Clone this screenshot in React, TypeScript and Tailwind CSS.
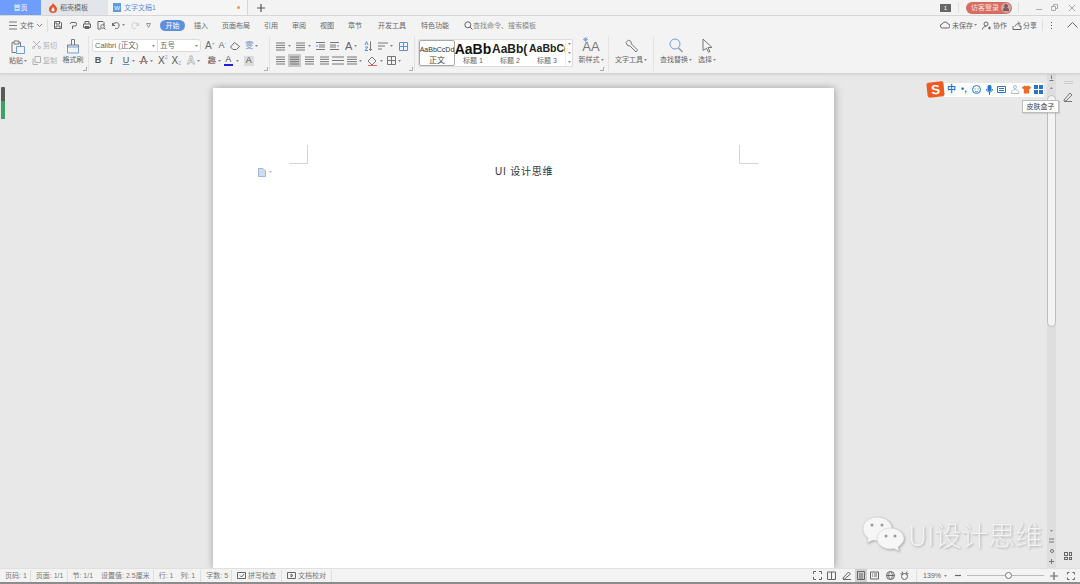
import React from "react";

const S = ({ w = 10, h = 10, c = "", children }: { w?: number; h?: number; c?: string; children?: React.ReactNode }) => (
  <svg width={w} height={h} viewBox={`0 0 ${w} ${h}`} fill="none" stroke="currentColor" strokeWidth={1} className={`shrink-0 block ${c}`}>
    {children}
  </svg>
);
const Car = ({ c = "" }: { c?: string }) => (
  <svg width={3} height={2} viewBox="0 0 3 2" className={`shrink-0 block ${c}`}><path d="M0 0h3L1.5 2z" fill="#8a8a8a" /></svg>
);
const Sep = ({ c = "" }: { c?: string }) => <div className={`w-px bg-[#dedede] shrink-0 ${c}`} />;
const Corner = ({ c = "" }: { c?: string }) => (
  <svg width={4} height={4} viewBox="0 0 4 4" className={`shrink-0 block text-[#999] ${c}`} fill="none" stroke="currentColor" strokeWidth={0.8}><path d="M0 3.5h3.5V0" /></svg>
);
const Lines = ({ w = 9, n = 4, c = "" }: { w?: number; n?: number; c?: string }) => (
  <S w={w} h={9} c={c}>
    {Array.from({ length: n }).map((_, i) => (
      <path key={i} d={`M0 ${1 + (i * 7) / (n - 1)}h${w}`} stroke="#777" />
    ))}
  </S>
);

const menu: [string, string][] = [
  ["插入", "ml-[9px]"],
  ["页面布局", "ml-[14px]"],
  ["引用", "ml-[14px]"],
  ["审阅", "ml-[14px]"],
  ["视图", "ml-[14px]"],
  ["章节", "ml-[14px]"],
  ["开发工具", "ml-[16px]"],
  ["特色功能", "ml-[15px]"],
];

export default function App() {
  return (
    <div className="w-[1080px] h-[584px] flex flex-col overflow-hidden relative bg-[#e8e8e8] text-[#666] text-[7px] leading-none font-['Liberation_Sans','Noto_Sans_CJK_SC',sans-serif]">
      {/* tab bar */}
      <div className="h-[16px] shrink-0 flex bg-[#f3f3f3] border-b border-[#d6d6d6]">
        <div className="w-[41px] bg-[#6f9dfb] text-white flex items-center justify-center">首页</div>
        <div className="w-[67px] bg-[#e2e5ea] flex items-center pl-[8px] gap-[3px]">
          <svg width={8} height={10} viewBox="0 0 8 10" className="block"><path d="M4 0c1 2 4 3 4 6a4 4 0 0 1-8 0c0-3 3-3 4-6z" fill="#e4572e" /><path d="M4 4c.5 1 1.5 1.5 1.5 3a1.5 1.5 0 0 1-3 0C2.500 6 3.500 5 4 4z" fill="#fff" /></svg>
          <span>稻壳模板</span>
        </div>
        <div className="w-[140px] flex items-center pl-[5px] border-r border-[#d6d6d6] bg-[#f5f5f5]">
          <div className="w-[8px] h-[9px] bg-[#5a9ae6] text-white text-[6px] flex items-center justify-center">W</div>
          <span className="ml-[3px] text-[#5f8fe0]">文字文稿1</span>
          <div className="ml-auto mr-[7px] w-[3px] h-[3px] rounded-full bg-[#ee9a4d]" />
        </div>
        <S w={8} h={8} c="ml-[9px] self-center text-[#555]"><path d="M4 0v8M0 4h8" strokeWidth={1.2} /></S>
        <div className="ml-auto flex items-center">
          <div className="w-[11px] h-[8px] bg-[#666] text-white text-[6px] flex items-center justify-center">1</div>
          <Sep c="h-[11px] ml-[7px]" />
          <div className="ml-[7px] w-[46px] h-[12px] rounded-full bg-[#d96b60] text-[#f8e2df] flex items-center pl-[5px]">
            <span>访客登录</span>
            <div className="ml-auto mr-[1px] w-[10px] h-[10px] rounded-full bg-[#c9aaa6] flex items-center justify-center">
              <S w={6} h={7} c="text-[#7d5a57]"><circle cx={3} cy={2} r={1.500} fill="currentColor" /><path d="M0 7c0-2 1-3 3-3s3 1 3 3z" fill="currentColor" /></S>
            </div>
          </div>
          <Sep c="h-[11px] ml-[6px]" />
          <S w={6} h={6} c="ml-[17px] text-[#aaa]"><path d="M0 4.500h6" /></S>
          <S w={7} h={7} c="ml-[9px] text-[#aaa]"><path d="M.5 2.500h4v4h-4zM2.500 2.500V.5h4v4h-2" /></S>
          <S w={6} h={6} c="ml-[11px] mr-[5px] text-[#aaa]"><path d="M0 0l6 6M6 0L0 6" /></S>
        </div>
      </div>

      {/* menu row */}
      <div className="h-[18px] shrink-0 flex items-center bg-[#f3f3f3] pl-[9px]">
        <Lines w={8} n={3} />
        <span className="ml-[3px]">文件</span>
        <S w={5} h={3} c="ml-[3px] text-[#888]"><path d="M0 0l2.500 2.500L5 0" /></S>
        <Sep c="h-[13px] ml-[5px]" />
        <S w={8} h={8} c="ml-[6px]"><path d="M.5.500h5.500l1.500 1.500v5.500h-7zM2 .5v2.500h3.500V.5M2 7.500V5h4v2.500" /></S>
        <S w={8} h={9} c="ml-[7px]"><path d="M2 1.500h4a1.500 1.500 0 0 1 0 3.500H3.500M1 3l1-1.500M3.500 5v3" /></S>
        <S w={8} h={8} c="ml-[6px]"><path d="M2 3V.5h4V3M.5 3h7v3.500h-7zM2 5.500h4v2H2z" /></S>
        <S w={9} h={9} c="ml-[6px]"><path d="M1 .5h5l1 1v3M1 .5v7.500h3" /><circle cx={5.500} cy={5.500} r={1.800} /><path d="M7 7l1.500 1.500" /></S>
        <S w={8} h={7} c="ml-[6px]"><path d="M1 3.500a3 3 0 1 1 2 3M.5 1v2.500H3" /></S>
        <Car c="ml-[2px]" />
        <S w={8} h={7} c="ml-[6px] text-[#ccc]"><path d="M7 3.500a3 3 0 1 0-2 3M7.500 1v2.500H5" /></S>
        <S w={5} h={5} c="ml-[7px] text-[#999]"><path d="M.5.500h4L2.500 4.500z" /></S>
        <div className="ml-[9px] w-[25px] h-[11px] rounded-full bg-[#5d8fe0] text-white flex items-center justify-center">开始</div>
        {menu.map(([t, c]) => (
          <span key={t} className={c}>{t}</span>
        ))}
        <S w={9} h={9} c="ml-[15px]"><circle cx={3.800} cy={3.800} r={3} /><path d="M6 6l2.500 2.500" /></S>
        <span className="text-[#888]">查找命令、搜索模板</span>
        <div className="ml-auto flex items-center">
          <S w={10} h={8} c="text-[#666]"><path d="M2.500 7a2 2 0 0 1-.2-4A3 3 0 0 1 8 3a2 2 0 0 1 0 4z" /></S>
          <span className="ml-[2px]">未保存</span>
          <Car c="ml-[1px]" />
          <S w={9} h={9} c="ml-[5px] text-[#666]"><circle cx={4} cy={3} r={2} /><path d="M.5 8.500c0-2 1.500-3 3.500-3M6 7h3M7.500 5.500v3" /></S>
          <span className="ml-[2px]">协作</span>
          <S w={10} h={9} c="ml-[5px] text-[#666]"><path d="M1 5v3.500h8V5H7M3 5.500C3.500 3.500 5 2.500 7 2.500M6 .5l2 2-2 2" /></S>
          <span className="ml-[1px]">分享</span>
          <Sep c="h-[11px] ml-[5px]" />
          <div className="ml-[8px] flex flex-col gap-[2px]">
            <div className="w-[1px] h-[1px] bg-[#555]" />
            <div className="w-[1px] h-[1px] bg-[#555]" />
            <div className="w-[1px] h-[1px] bg-[#555]" />
          </div>
          <S w={11} h={6} c="ml-[15px] mr-[2px] text-[#666]"><path d="M.5 5.500L5.500.5l5 5" /></S>
        </div>
      </div>

      {/* ribbon */}
      <div className="h-[40px] shrink-0 flex bg-[#f3f3f3] border-b border-[#d3d3d3] shadow-[0_1px_2px_rgba(0,0,0,0.08)] relative">
        {/* clipboard */}
        <div className="w-[89px] shrink-0 flex border-r border-[#e3e3e3] my-[2px] relative">
          <div className="ml-[8px] w-[20px] flex flex-col items-center pt-[4px]">
            <S w={14} h={15}><path d="M2.500 2.500H1v10h4M3 1h5v3H3zM8 2.500h1.500V6" stroke="#777" /><path d="M5.500 6.500h8v7h-8z" stroke="#6f9fdc" /></S>
            <div className="mt-[2px] flex items-center">粘贴<Car c="ml-[1px]" /></div>
          </div>
          <div className="ml-[4px] w-[28px] flex flex-col pt-[5px] text-[#b0b0b0]">
            <div className="flex items-center gap-[2px]">
              <S w={9} h={8}><path d="M1 0l6 6M8 0L2 6" /><circle cx={1.500} cy={6.500} r={1} /><circle cx={7.500} cy={6.500} r={1} /></S>
              剪切
            </div>
            <div className="flex items-center gap-[2px] mt-[7px]">
              <S w={9} h={9}><path d="M3 .5h5.500v6H3zM1 2.500v6h5" /></S>
              复制
            </div>
          </div>
          <div className="ml-[1px] w-[24px] flex flex-col items-center pt-[2px]">
            <S w={14} h={16}><path d="M5.500 7V1.500h3V7M1.500 9V7h11v2" stroke="#777" /><path d="M1.500 9h11v6h-11z" stroke="#6f9fdc" /></S>
            <div className="mt-[2px] whitespace-nowrap">格式刷</div>
          </div>
          <Corner c="absolute right-[1px] bottom-0" />
        </div>

        {/* font */}
        <div className="w-[181px] shrink-0 flex flex-col border-r border-[#e3e3e3] my-[2px] pl-[3px] pt-[3px] relative">
          <div className="flex items-center h-[13px]">
            <div className="w-[109px] shrink-0 h-[13px] bg-white rounded-[3px] border border-[#dcdcdc] flex items-center text-[7.500px]">
              <div className="w-[64px] shrink-0 flex items-center">
                <span className="ml-[2px] whitespace-nowrap">Calibri (正文)</span>
                <Car c="ml-auto mr-[2px]" />
              </div>
              <Sep c="h-[11px]" />
              <div className="flex-1 flex items-center">
                <span className="ml-[2px] whitespace-nowrap">五号</span>
                <Car c="ml-auto mr-[2px]" />
              </div>
            </div>
            <span className="ml-[4px] text-[10px] text-[#666]">A</span>
            <span className="text-[5px] text-[#6f9fdc] self-start mt-[2px]">+</span>
            <span className="ml-[4px] text-[9px] text-[#666]">A</span>
            <span className="text-[5px] text-[#6f9fdc] self-start mt-[2px]">-</span>
            <S w={10} h={8} c="ml-[4px] text-[#666]"><path d="M.5 5L4.500.5l5 4-3 3H3z" /></S>
            <span className="ml-[5px] text-[8px] text-[#7a8fc8] whitespace-nowrap">雯</span>
            <Car c="ml-[2px]" />
          </div>
          <div className="flex items-center mt-[3px] h-[11px] text-[#555]">
            <span className="ml-[2px] w-[8px] text-center text-[9px] font-bold">B</span>
            <span className="ml-[6px] w-[7px] text-center text-[10px] italic font-['Liberation_Serif',serif]">I</span>
            <span className="ml-[7px] w-[8px] text-center text-[9px] underline decoration-[#5d8fe0]">U</span>
            <Car c="ml-[2px]" />
            <span className="ml-[4px] w-[9px] text-center text-[10px] relative">A<span className="absolute left-0 right-0 top-[5px] h-px bg-[#d96b60]" /></span>
            <Car c="ml-[2px]" />
            <span className="ml-[5px] text-[10px]">X</span>
            <span className="text-[5px] text-[#6f9fdc] self-start">2</span>
            <span className="ml-[4px] text-[10px]">X</span>
            <span className="text-[5px] text-[#6f9fdc] self-end">2</span>
            <span className="ml-[6px] text-[11px] font-bold [-webkit-text-stroke:0.3px_#666] text-transparent">A</span>
            <Car c="ml-[2px]" />
            <span className="ml-[8px] text-[8px] relative">趣<span className="absolute left-0 right-0 top-[4px] h-px bg-[#d96b60]" /></span>
            <Car c="ml-[2px]" />
            <span className="ml-[3px] w-[9px] text-center text-[9px] border-b-2 border-[#1d1dd8] h-[11px]">A</span>
            <Car c="ml-[3px]" />
            <span className="ml-[5px] w-[10px] h-[10px] bg-[#dcdcdc] flex items-center justify-center text-[9px]">A</span>
          </div>
          <Corner c="absolute right-[1px] bottom-0" />
        </div>

        {/* paragraph */}
        <div className="w-[145px] shrink-0 flex flex-col border-r border-[#e3e3e3] my-[2px] pl-[6px] pt-[4px] relative">
          <div className="flex items-center h-[12px]">
            <Lines w={9} />
            <Car c="ml-[3px]" />
            <Lines w={9} c="ml-[5px]" />
            <Car c="ml-[3px]" />
            <S w={9} h={8} c="ml-[5px] text-[#777]"><path d="M0 .5h9M3 3h6M3 5h6M0 7.500h9" /><path d="M0 4h2" stroke="#5d8fe0" /></S>
            <S w={9} h={8} c="ml-[5px] text-[#777]"><path d="M0 .5h9M0 3h6M0 5h6M0 7.500h9" /><path d="M7 4h2" stroke="#5d8fe0" /></S>
            <span className="ml-[6px] text-[11px] text-[#666]">A</span>
            <Car c="ml-[2px]" />
            <S w={8} h={10} c="ml-[7px] text-[#777]"><path d="M1 4l1.500-3.500L4 4M1 6h3L1 9.500h3" stroke="#5d8fe0" /><path d="M6.500 .5v9M5 8l1.500 1.500L8 8" /></S>
            <S w={10} h={8} c="ml-[6px] text-[#777]"><path d="M0 1h10M0 4h7M0 7h4" /></S>
            <Car c="ml-[2px]" />
            <S w={9} h={9} c="ml-[6px] text-[#5d8fe0]"><path d="M.5.500h8v8h-8zM4.500.5v8M.5 4.500h8" /></S>
          </div>
          <div className="flex items-center mt-[2px] h-[13px]">
            <Lines w={9} />
            <div className="ml-[3px] w-[13px] h-[13px] bg-[#c8c8c8] rounded-[1px] flex items-center justify-center"><Lines w={9} /></div>
            <Lines w={9} c="ml-[4px]" />
            <Lines w={9} c="ml-[6px]" />
            <Lines w={12} n={3} c="ml-[3px]" />
            <Lines w={10} c="ml-[3px]" />
            <Car c="ml-[2px]" />
            <S w={11} h={10} c="ml-[5px] text-[#777]"><path d="M1 5l4-4 4 4-4 4z" /><path d="M1 9.500h9" stroke="#d96b60" /></S>
            <Car c="ml-[2px]" />
            <S w={9} h={9} c="ml-[4px] text-[#777]"><path d="M.5.500h8v8h-8zM4.500.5v8M.5 4.500h8" /></S>
            <Car c="ml-[2px]" />
          </div>
          <Corner c="absolute right-[1px] bottom-0" />
        </div>

        {/* styles */}
        <div className="w-[194px] shrink-0 flex border-r border-[#e3e3e3] my-[2px] relative">
          <div className="ml-[3px] mt-[3px] w-[155px] h-[28px] bg-white border border-[#dcdcdc] rounded-[2px] flex overflow-hidden">
            <div className="w-[36px] shrink-0 border border-[#a8a8a8] rounded-[2px] flex flex-col items-center overflow-hidden">
              <div className="h-[17px] flex items-center text-[7px] text-[#333] whitespace-nowrap">AaBbCcDd</div>
              <div className="text-[#444] text-[8px]">正文</div>
            </div>
            <div className="w-[36px] shrink-0 flex flex-col items-center overflow-hidden">
              <div className="h-[17px] flex items-center text-[14px] font-bold text-[#111] whitespace-nowrap">AaBb</div>
              <div className="text-[7px]">标题 1</div>
            </div>
            <div className="w-[37px] shrink-0 flex flex-col items-start overflow-hidden pl-[1px]">
              <div className="h-[17px] flex items-center text-[12px] font-bold text-[#222] whitespace-nowrap">AaBb(</div>
              <div className="text-[7px] self-center">标题 2</div>
            </div>
            <div className="w-[37px] shrink-0 flex flex-col items-start overflow-hidden pl-[1px]">
              <div className="h-[17px] flex items-center text-[10.500px] font-bold text-[#222] whitespace-nowrap">AaBbC(</div>
              <div className="text-[7px] self-center">标题 3</div>
            </div>
            <div className="flex-1 flex flex-col items-center justify-around border-l border-[#eee]">
              <Car /><Car /><Car />
            </div>
          </div>
          <div className="ml-[4px] w-[28px] flex flex-col items-center pt-[2px]">
            <div className="h-[15px] flex items-end relative">
              <svg width={5} height={5} viewBox="0 0 5 5" className="block absolute left-[1px] top-[-1px]"><path d="M2.500 0v5M0 2.500h5M.7.7l3.600 3.600M4.300.7L.7 4.300" stroke="#6f9fdc" strokeWidth={0.8} /></svg>
              <span className="text-[13px] text-[#777]">AA</span>
            </div>
            <div className="mt-[3px] flex items-center whitespace-nowrap">新样式<Car c="ml-[1px]" /></div>
          </div>
          <Corner c="absolute right-[4px] bottom-0" />
        </div>

        {/* tools */}
        <div className="w-[45px] shrink-0 flex flex-col items-center border-r border-[#e3e3e3] my-[2px] pt-[3px]">
          <S w={13} h={14} c="text-[#777]"><path d="M1 3.500L3.500 1l2.500 1.500.5 2.500 6 6-1.500 2-6-6-2.500-.5z" /></S>
          <div className="mt-[3px] flex items-center whitespace-nowrap">文字工具<Car c="ml-[1px]" /></div>
        </div>
        <div className="ml-[3px] w-[38px] shrink-0 flex flex-col items-center my-[2px] pt-[2px]">
          <S w={14} h={15} c="text-[#6f9fdc]"><circle cx={6} cy={6} r={5} /><path d="M9.500 10l4 4" stroke="#999" strokeWidth={1.500} /></S>
          <div className="mt-[3px] flex items-center whitespace-nowrap">查找替换<Car c="ml-[1px]" /></div>
        </div>
        <div className="w-[24px] shrink-0 flex flex-col items-center my-[2px] pt-[2px]">
          <S w={11} h={15} c="text-[#777]"><path d="M1 1l9 8.500H6l2 4-1.500.7-2-4L1 12.500z" /></S>
          <div className="mt-[3px] flex items-center whitespace-nowrap">选择<Car c="ml-[1px]" /></div>
        </div>
      </div>

      {/* body */}
      <div className="flex-1 min-h-0 flex">
        <div className="w-[213px] shrink-0 pl-[1px] pt-[13px]">
          <div className="w-[4px] h-[32px] rounded-[1px] bg-[#5a5a5a] flex flex-col justify-end">
            <div className="h-[18px] bg-[#3fa066] rounded-b-[1px]" />
          </div>
        </div>
        <div className="w-[621px] shrink-0 mt-[14px] bg-white shadow-[2px_0_8px_rgba(0,0,0,0.22),-2px_0_6px_rgba(0,0,0,0.12)] pt-[57px]">
          <div className="flex justify-between px-[76px]">
            <div className="w-[19px] h-[19px] border-r border-b border-[#d5d5d5]" />
            <div className="w-[19px] h-[19px] border-l border-b border-[#d5d5d5]" />
          </div>
          <div className="flex items-center mt-[2px] h-[12px]">
            <S w={8} h={9} c="ml-[45px] text-[#9db7d8]"><path d="M.5.5H5l2.500 2.500v5.500h-7z" fill="#cfdcec" /></S>
            <Car c="ml-[3px] opacity-60" />
            <span className="ml-[223px] text-[10px] tracking-[0.8px] text-[#333] whitespace-nowrap">UI 设计思维</span>
          </div>
        </div>
        <div className="flex-1" />
        {/* scrollbar */}
        <div className="w-[9px] shrink-0 bg-[#dedede] flex flex-col items-center text-[#777]">
          <S w={5} h={6} c="mt-[1px]"><path d="M.5 5.500h4M2.500 4V.5" /></S>
          <Car c="mt-[6px] rotate-180" />
          <div className="mt-[6px] w-[9px] h-[232px] bg-[#f4f4f4] border border-[#bdbdbd] rounded-full" />
          <div className="mt-auto mb-[4px] flex flex-col items-center gap-[6px]">
            <Car />
            <S w={5} h={5}><path d="M0 1h5M0 4h5" /></S>
            <S w={4} h={4}><circle cx={2} cy={2} r={1.500} /></S>
            <S w={5} h={5}><path d="M0 2.500h5M2.500 0v5" /></S>
          </div>
        </div>
        {/* side panel */}
        <div className="w-[24px] shrink-0 flex flex-col items-center pt-[7px] text-[#777]">
          <S w={9} h={3} c="text-[#ccc]"><path d="M0 .5h9M0 2.500h9" /></S>
          <S w={10} h={10} c="mt-[8px]"><path d="M1 8l6-7 2 2-6 6H1zM1 9.500h8" /></S>
          <div className="mt-auto mb-[8px] grid grid-cols-2 gap-[1px]">
            <div className="w-[3.500px] h-[3.500px] border border-[#666]" />
            <div className="w-[3.500px] h-[3.500px] border border-[#666]" />
            <div className="w-[3.500px] h-[3.500px] border border-[#666]" />
            <div className="w-[3.500px] h-[3.500px] border border-[#666]" />
          </div>
        </div>
      </div>

      {/* status bar */}
      <div className="h-[14px] shrink-0 flex items-center bg-[#f3f3f3] text-[#777] text-[7px] whitespace-nowrap border-t border-[#e0e0e0]">
        <span className="ml-[5px]">页码: 1</span>
        <Sep c="h-[12px] ml-[3px]" />
        <span className="ml-[5px]">页面: 1/1</span>
        <Sep c="h-[12px] ml-[4px]" />
        <span className="ml-[4px]">节: 1/1</span>
        <span className="ml-[8px]">设置值: 2.5厘米</span>
        <Sep c="h-[12px] ml-[3px]" />
        <span className="ml-[5px]">行: 1</span>
        <span className="ml-[7px]">列: 1</span>
        <Sep c="h-[12px] ml-[5px]" />
        <span className="ml-[5px]">字数: 5</span>
        <Sep c="h-[12px] ml-[3px]" />
        <S w={9} h={7} c="ml-[5px] text-[#666]"><path d="M.5.5h8v6h-8zM3 3.500l1.500 1.500L7 2" /></S>
        <span className="ml-[2px]">拼写检查</span>
        <Sep c="h-[12px] ml-[5px]" />
        <S w={9} h={7} c="ml-[5px] text-[#666]"><path d="M.5.5h8v6h-8zM4 2l2 1.500L4 5z" /></S>
        <span className="ml-[2px]">文档校对</span>
        <Sep c="h-[12px] ml-[5px]" />
        <div className="ml-auto flex items-center text-[#666]">
          <S w={9} h={9}><path d="M.5 3V.5H3M6 .5h2.500V3M8.500 6v2.500H6M3 8.500H.5V6" /></S>
          <S w={9} h={9} c="ml-[5px]"><path d="M.5 1h8v7.500h-8zM4.500 1v7.500" /></S>
          <S w={9} h={9} c="ml-[6px]"><path d="M1 7l5.500-6 2 2-6 5H1zM1 8.500h8" /></S>
          <div className="ml-[4px] w-[12px] h-[13px] bg-[#d0d0d0] flex items-center justify-center"><S w={8} h={9}><path d="M.5.5h7v8h-7zM2 3h4M2 5h4M2 7h4" /></S></div>
          <S w={9} h={9} c="ml-[3px]"><path d="M.5 1h8v7h-8zM2 3h1M4 3h3M2 5h1M4 5h3" /></S>
          <S w={9} h={9} c="ml-[7px]"><circle cx={4.500} cy={4.500} r={4} /><path d="M.5 4.500h8M4.500.5c-2.500 2.500-2.500 5.500 0 8M4.500.5c2.500 2.500 2.500 5.500 0 8" /></S>
          <S w={9} h={9} c="ml-[5px]"><circle cx={4.500} cy={5.500} r={3} /><path d="M2 .5l1 2.500M7 .5L6 3M.5 2l2 2M8.500 2l-2 2" /></S>
          <Sep c="h-[12px] ml-[7px]" />
          <span className="ml-[6px]">139%</span>
          <Car c="ml-[3px]" />
          <S w={6} h={3} c="ml-[8px]"><path d="M0 1.500h6" strokeWidth={1.200} /></S>
          <div className="ml-[6px] w-[77px] h-px bg-[#bbb] flex items-center">
            <div className="ml-[38px] w-[7px] h-[7px] rounded-full bg-white border border-[#777]" />
          </div>
          <S w={8} h={8} c="ml-[6px]"><path d="M0 4h8M4 0v8" strokeWidth={1.200} /></S>
          <S w={8} h={8} c="ml-[9px] mr-[5px]"><path d="M.5 2.500v-2h2M5.500.5h2v2M7.500 5.500v2h-2M2.500 7.500h-2v-2" /></S>
        </div>
      </div>
      <div className="h-[2px] shrink-0 bg-[#8c8c8c]" />

      {/* Sogou input bar overlay */}
      <div className="absolute left-[927px] top-[82px] flex items-center">
        <div className="w-[17px] h-[15px] bg-[#ef5a24] rounded-[2px] -rotate-6 text-white text-[13px] font-bold flex items-center justify-center z-10">S</div>
        <div className="w-[100px] h-[14px] bg-white flex items-center text-[#1e78c8]">
          <span className="ml-[3px] text-[9px] font-bold">中</span>
          <span className="ml-[5px] text-[9px] font-bold leading-none">•,</span>
          <S w={9} h={9} c="ml-[5px]"><circle cx={4.500} cy={4.500} r={4} /><path d="M3 3.500v1M6 3.500v1M3 6c1 1 2 1 3 0" /></S>
          <S w={7} h={10} c="ml-[5px]"><rect x={2} y={0} width={3} height={6} rx={1.500} fill="currentColor" /><path d="M.5 4c0 4 6 4 6 0M3.500 7v3" /></S>
          <S w={9} h={7} c="ml-[4px]"><path d="M.5.5h8v6h-8zM2 2.500h5M2 4.500h5" /></S>
          <S w={9} h={9} c="ml-[5px] text-[#aebfd0]"><circle cx={4} cy={2} r={1.500} /><path d="M.5 8.500c0-3 1.500-4 3.500-4s4 1 4 4z" /></S>
          <svg width={9} height={9} viewBox="0 0 10 9" className="block ml-[2px]"><path d="M3 0l2 1 2-1 3 2-1 2H8v5H2V4H1L0 2z" fill="#f0692a" /></svg>
          <svg width={9} height={9} viewBox="0 0 9 9" className="block ml-[3px]"><path d="M0 0h4v4H0zM5 0h4v4H5zM0 5h4v4H0zM5 5h4v4H5z" fill="#2778c4" /></svg>
        </div>
      </div>
      <div className="absolute left-[1022px] top-[100px] w-[37px] h-[13px] bg-white border border-[#bdbdbd] text-[#444] text-[7px] flex items-center justify-center whitespace-nowrap shadow-[1px_1px_1px_rgba(0,0,0,0.1)]">皮肤盒子</div>

      {/* Watermark overlay */}
      <div className="absolute left-[862px] top-[515px] flex items-center drop-shadow-[1px_1px_1px_rgba(0,0,0,0.25)] text-[#f4f4f4]">
        <svg width={44} height={38} viewBox="0 0 44 38" className="block">
          <path d="M15 2C7 2 1 7 1 14c0 4 2 7 5 9l-1 5 6-3c2 .5 3 .6 5 .6 8 0 14-5 14-11.600S23 2 15 2z" fill="#f6f6f6" stroke="#c4c4c4" strokeWidth={0.5} />
          <path d="M28 13c-7 0-13 4.500-13 10.500S21 34 28 34c1.500 0 3-.3 4-.6l5 3-1-4.500c3-2 6-5 6-8.500C42 17.500 35 13 28 13z" fill="#f6f6f6" stroke="#c4c4c4" strokeWidth={0.5} />
          <circle cx={10} cy={10} r={1.500} fill="#9a9a9a" />
          <circle cx={20} cy={10} r={1.500} fill="#9a9a9a" />
          <circle cx={24} cy={21} r={1.500} fill="#9a9a9a" />
          <circle cx={33} cy={21} r={1.500} fill="#9a9a9a" />
        </svg>
        <span className="ml-[2px] text-[27px] font-light font-['Noto_Sans_CJK_SC',sans-serif] whitespace-nowrap">UI设计思维</span>
      </div>
    </div>
  );
}
